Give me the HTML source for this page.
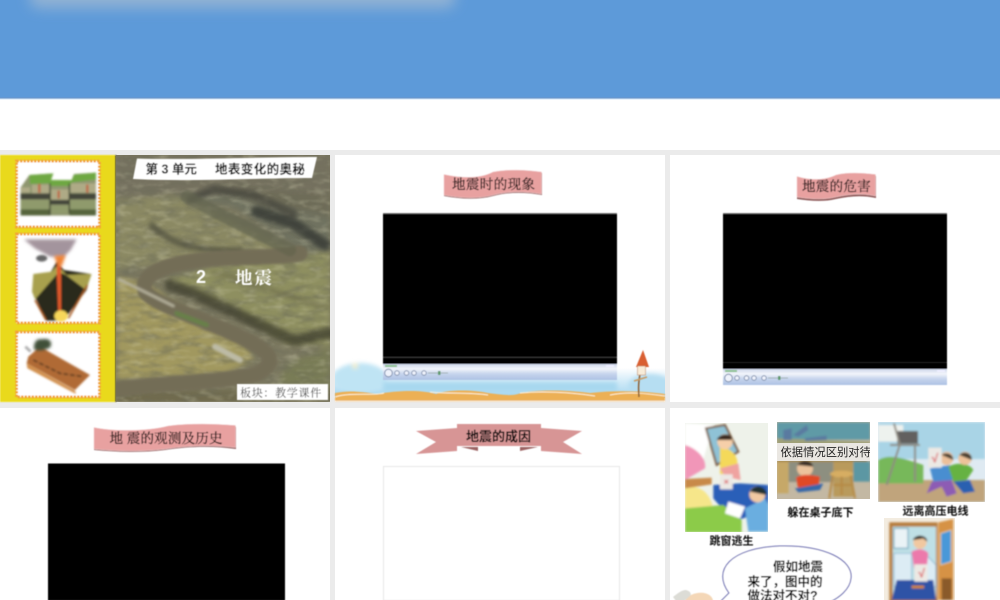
<!DOCTYPE html>
<html lang="zh"><head><meta charset="utf-8"><title>地震</title>
<style>
html,body{margin:0;padding:0;background:#fff;width:1000px;height:600px;overflow:hidden}
svg{display:block}
text{font-family:"Liberation Sans","Noto Sans CJK SC",sans-serif}
.serif{font-family:"Liberation Serif","Noto Serif CJK SC",serif;stroke:#1a0f0f;stroke-width:.22}
</style></head><body>
<svg width="1000" height="600" viewBox="0 0 1000 600" xmlns="http://www.w3.org/2000/svg">
<defs>
<filter id="b03" x="-5%" y="-5%" width="110%" height="110%"><feGaussianBlur stdDeviation="0.4"/></filter>
<filter id="z2" x="-5%" y="-5%" width="110%" height="110%"><feGaussianBlur stdDeviation="3.200"/></filter>
<filter id="z4" x="-10%" y="-10%" width="120%" height="120%"><feGaussianBlur stdDeviation="4"/></filter>
<filter id="z7" x="-10%" y="-10%" width="120%" height="120%"><feGaussianBlur stdDeviation="7"/></filter>
<filter id="z9" x="-20%" y="-20%" width="140%" height="140%"><feGaussianBlur stdDeviation="9"/></filter>
<filter id="b2" x="-20%" y="-40%" width="140%" height="180%"><feGaussianBlur stdDeviation="2"/></filter>
<filter id="b6" x="-30%" y="-200%" width="160%" height="500%"><feGaussianBlur stdDeviation="7"/></filter>
<filter id="dark" x="0" y="0" width="100%" height="100%"><feTurbulence type="fractalNoise" baseFrequency="0.05 0.14" numOctaves="3" seed="7"/><feColorMatrix values="0 0 0 0 .15  0 0 0 0 .15  0 0 0 0 .1  2.400 0 0 0 -1.050"/><feGaussianBlur stdDeviation=".8"/></filter>
<filter id="light" x="0" y="0" width="100%" height="100%"><feTurbulence type="fractalNoise" baseFrequency="0.07 0.18" numOctaves="3" seed="23"/><feColorMatrix values="0 0 0 0 .74  0 0 0 0 .72  0 0 0 0 .5  2.400 0 0 0 -1.150"/><feGaussianBlur stdDeviation=".8"/></filter>
<linearGradient id="ctl" x1="0" y1="0" x2="0" y2="1"><stop offset="0" stop-color="#cdd6ea"/><stop offset=".3" stop-color="#f2f5fb"/><stop offset=".62" stop-color="#c6d4ec"/><stop offset="1" stop-color="#adc2e4"/></linearGradient>
<linearGradient id="sky" x1="0" y1="0" x2="0" y2="1"><stop offset="0" stop-color="#fff"/><stop offset=".3" stop-color="#e0f1fa"/><stop offset="1" stop-color="#9fd4ef"/></linearGradient>
<clipPath id="c1"><rect x="116" y="155" width="214" height="247"/></clipPath>
<clipPath id="cA"><rect x="685" y="423" width="83" height="109"/></clipPath>
<clipPath id="cB"><rect x="777" y="422" width="93" height="77"/></clipPath>
<clipPath id="cC"><rect x="878" y="422" width="107" height="80"/></clipPath>
<clipPath id="cD"><rect x="884" y="518" width="71" height="82"/></clipPath>
<clipPath id="cS"><rect x="335" y="355" width="330" height="47"/></clipPath>
</defs>

<!-- page -->
<rect width="1000" height="600" fill="#ebebeb"/>
<rect width="1000" height="98" fill="#5d9ad9"/>
<rect x="30" y="-24" width="425" height="32" rx="8" fill="#a9bdd2" opacity=".7" filter="url(#b6)"/>
<rect y="97.500" width="1000" height="1" fill="#6d94c6"/>
<rect y="98.500" width="1000" height="1" fill="#cfe6f8"/>
<rect y="99.500" width="1000" height="50.500" fill="#fff"/>
<rect x="0" y="155" width="330" height="247" fill="#fff"/>
<rect x="335" y="155" width="330" height="247" fill="#fff"/>
<rect x="670" y="155" width="330" height="247" fill="#fff"/>
<rect x="0" y="408" width="330" height="192" fill="#fff"/>
<rect x="335" y="408" width="330" height="192" fill="#fff"/>
<rect x="670" y="408" width="330" height="192" fill="#fff"/>

<!-- PANEL 1 -->
<g filter="url(#b03)">
<rect x="0" y="155" width="115" height="247" fill="#e9d91d"/>
<rect x="115" y="155" width="1.500" height="247" fill="#4a4a30"/>
<g fill="#fff" stroke="#f2a436" stroke-width="3" stroke-dasharray="2.400 1.100">
<rect x="16.500" y="161" width="83" height="66"/>
<rect x="16.500" y="234" width="83" height="89"/>
<rect x="16.500" y="332" width="83" height="65"/>
</g>
</g>
<!-- strata -->
<g transform="translate(0,150) scale(.3333)" filter="url(#z2)">
<path d="M62 112L88 75L160 70L150 92H214L222 72L288 68V197H62Z" fill="#8f9670"/>
<path d="M88 75L160 70L150 100L90 102ZM222 74L288 68V88L212 98ZM150 90H214V108H150Z" fill="#6ea842"/>
<path d="M62 112H90V128H62ZM96 104H150V130H96ZM212 100H288V128H212ZM154 118H206V148H154Z" fill="#aeaa86"/>
<path d="M62 130H150V148H62ZM150 150H208V164H150ZM208 130H288V148H208Z" fill="#45473a"/>
<path d="M62 150H150V178H62ZM208 150H288V178H208ZM152 166H206V190H152Z" fill="#8f9a6c"/>
<path d="M62 178H150V196H62ZM208 178H288V196H208Z" fill="#56653c"/>
<path d="M118 102V128M176 122V145M262 104V128" stroke="#c05a36" stroke-width="6"/>
<path d="M150 100V195M208 100V190" stroke="#3d4230" stroke-width="4"/>
</g>
<!-- volcano -->
<g transform="translate(0,150) scale(.3333)" filter="url(#z2)">
<path d="M72 268L230 268L212 300L190 322L150 320L105 295Z" fill="#85707c" opacity=".75" filter="url(#z4)"/>
<ellipse cx="125" cy="325" rx="17" ry="10" fill="#666"/>
<path d="M170 335L192 360L272 372L260 420L190 512H138L98 425L102 380L150 370Z" fill="#2b291c"/>
<path d="M100 372L155 365L168 350L186 360L200 375L275 372L258 420L205 380L192 372L175 368L160 385L105 448L96 425Z" fill="#a8a04e"/>
<path d="M175 325L183 355L183 490H175L170 358Z" fill="#e25a2c"/>
<path d="M162 318L197 315L185 350L174 350Z" fill="#ee8236" filter="url(#z4)"/>
<ellipse cx="183" cy="498" rx="20" ry="17" fill="#f7d75a"/>
<path d="M105 450L138 510M262 405L205 505" stroke="#a85a22" stroke-width="5"/>
</g>
<!-- plate -->
<g transform="translate(0,150) scale(.3333)" filter="url(#z2)">
<path d="M85 620L120 590L270 675L225 720L80 640Z" fill="#b06a36"/>
<path d="M80 640L225 722L228 732L82 655Z" fill="#d2904e"/>
<path d="M100 630L180 670L250 680" fill="none" stroke="#5a3a20" stroke-width="5" stroke-dasharray="14 6"/>
<path d="M102 598C100 575 112 565 125 568C148 562 160 578 150 592C130 604 112 604 102 598Z" fill="#3f4f38" filter="url(#z4)"/>
<path d="M76 590L92 605" stroke="#aaa" stroke-width="8"/>
</g>
<!-- photo -->
<g clip-path="url(#c1)">
<g transform="translate(0,150) scale(.3333)">
<rect x="348" y="15" width="645" height="740" fill="#7b7860"/>
<g filter="url(#z9)">
<rect x="348" y="15" width="645" height="125" fill="#75715e"/>
<path d="M350 150L530 135L880 305L640 320L450 345L350 360Z" fill="#8b8964"/>
<path d="M520 140L700 170L920 310L990 300L990 170L800 130Z" fill="#6f7260"/>
<path d="M640 110L990 130V200L780 160Z" fill="#6e6c58"/>
<path d="M350 380L440 400L560 480L740 580L760 630L680 670L350 690Z" fill="#a1985f"/>
<path d="M500 390L660 340L990 305V590L860 580L700 480Z" fill="#8e8f60"/>
<path d="M860 640L990 590V710L830 710Z" fill="#797c56"/>
<rect x="348" y="720" width="645" height="40" fill="#6f6a4e"/>
</g>
</g>
<rect x="116" y="155" width="214" height="247" filter="url(#dark)" opacity=".6"/>
<rect x="116" y="155" width="214" height="247" filter="url(#light)" opacity=".3"/>
<g transform="translate(0,150) scale(.3333)">
<g fill="none" stroke-linecap="round" stroke-linejoin="round" filter="url(#z7)" opacity=".72">
<path d="M570 150L640 118L760 135L880 190" stroke="#42433a" stroke-width="24"/>
<path d="M770 185L880 220L975 285" stroke="#2f322e" stroke-width="34"/>
<path d="M455 225C500 270 560 305 720 302" stroke="#4a4a3a" stroke-width="18"/>
<path d="M510 405C620 440 760 520 880 570C920 570 960 550 990 550" stroke="#3a3a2c" stroke-width="34"/>
<path d="M640 370C730 380 840 440 980 470" stroke="#6a694a" stroke-width="12"/>
</g>
<g fill="none" stroke-linecap="round" stroke-linejoin="round" filter="url(#z4)">
<path d="M900 310C800 330 650 312 520 345C440 368 420 400 440 430C480 470 620 510 740 570C820 610 830 640 770 672C650 700 500 698 345 718" stroke="#736d56" stroke-width="46"/>
<path d="M560 140C650 190 760 240 870 300" stroke="#62644f" stroke-width="38" opacity=".7"/>
<path d="M358 388L520 468" stroke="#b5b19c" stroke-width="8"/>
<path d="M645 590L720 630" stroke="#bdbba6" stroke-width="18"/>
<path d="M530 490L620 525" stroke="#68804a" stroke-width="14"/>
</g>
</g>
</g>
<g filter="url(#b03)">
<path d="M137 158.500C190 160 260 157 317 157L312 178C260 178 190 182 133 179Z" fill="#fff"/>
<text x="145.500" y="173.500" font-size="12.500" font-weight="700" fill="#111" xml:space="preserve">第 3 单元</text>
<text x="215" y="173.500" font-size="12.500" font-weight="700" fill="#111" letter-spacing=".4">地表变化的奥秘</text>
<text x="196" y="283" font-size="18" font-weight="700" fill="#fff">2</text>
<text x="235" y="284" font-size="17.500" font-weight="700" fill="#fff" letter-spacing="2" style="font-family:'Liberation Serif','Noto Serif CJK SC',serif">地震</text>
<rect x="237" y="384" width="91" height="16" fill="#fff"/>
<text x="240" y="396.500" font-size="11" fill="#222" letter-spacing=".7" style="font-family:'Liberation Serif','Noto Serif CJK SC',serif">板块：教学课件</text>
</g>

<!-- PANEL 2 -->
<g clip-path="url(#cS)">
<rect x="335" y="368" width="330" height="30" fill="url(#sky)"/>
<g filter="url(#b2)">
<ellipse cx="360" cy="378" rx="27" ry="15" fill="#bfe4f4"/>
<ellipse cx="650" cy="386" rx="22" ry="12" fill="#b6def2"/>
<rect x="383" y="382" width="234" height="10" fill="#a8d8ef"/>
<circle cx="355" cy="366" r="3" fill="#f2eecc"/>
</g>
</g>
<g filter="url(#b03)">
<path d="M335 393C350 390 362 392 378 394C392 391 420 389 436 394C445 390 470 389 488 393C505 395 510 396 518 394C530 390 560 389 590 393C615 390 645 391 665 394V402H335Z" fill="#ecb055"/>
<path d="M335 397C350 392 375 396 384 393M430 392C450 394 470 392 488 395M520 393C540 391 570 392 595 396M610 395C630 391 650 394 665 396" fill="none" stroke="#fdf0d8" stroke-width="1"/>
<rect x="335" y="400.500" width="330" height="1.500" fill="#f2dfc6"/>
<rect x="383" y="213" width="234" height="151" fill="#000"/>
<rect x="383" y="213" width="234" height=".8" fill="#888"/>
<rect x="383" y="357" width="234" height=".8" fill="#444"/>
<rect x="383" y="364" width="234" height="16" fill="url(#ctl)"/>
<rect x="385" y="365" width="12" height="2" fill="#8ac08e"/>
<rect x="606" y="365" width="8" height="2" fill="#eef"/>
<g fill="#eef2fb" stroke="#6f80a2" stroke-width=".8">
<circle cx="388.500" cy="373" r="3.800"/><circle cx="397" cy="373" r="2.300"/><circle cx="406.500" cy="373" r="2.300"/><circle cx="414" cy="373" r="2.300"/><circle cx="424" cy="373" r="2.300"/>
</g>
<path d="M428 373H448" stroke="#93a5a5" stroke-width=".8"/>
<rect x="438" y="371" width="2.500" height="4" fill="#5d9a6b"/>
<!-- birdhouse -->
<path d="M639 397C638 386 639 380 640 374" stroke="#8c5f36" stroke-width="1.500" fill="none"/>
<path d="M643 350L636 367H649Z" fill="#d95f30"/>
<rect x="637.500" y="366" width="8" height="9" fill="#f8ecd8" stroke="#b9764a" stroke-width=".5"/>
<path d="M634 381L647 377" stroke="#c99a62" stroke-width="1.500"/>
<!-- banner -->
<path d="M444 176C465 181 482 180 493 174C510 171 525 171 542 173V195C525 192 508 192 493 196C478 200 460 199 444 196Z" fill="#8e5a5a"/>
<path d="M444 174.500C465 179 482 178 493 172C510 169 525 170 541.500 172V194C525 191 508 191 493 195C478 199 460 198 444 195Z" fill="#e8a1a0" stroke="#f3cfcf" stroke-width=".5"/>
<text x="452" y="189" class="serif" font-size="13.500" fill="#1a0f0f" letter-spacing=".4">地震时的现象</text>
</g>

<!-- PANEL 3 -->
<g filter="url(#b03)">
<rect x="723" y="213" width="224" height="156" fill="#000"/>
<rect x="723" y="213" width="224" height=".8" fill="#888"/>
<rect x="723" y="362" width="224" height="1" fill="#222"/>
<rect x="723" y="369" width="224" height="16" fill="url(#ctl)"/>
<rect x="725" y="370" width="12" height="2" fill="#8ac08e"/>
<rect x="937" y="370" width="8" height="2" fill="#eef"/>
<g fill="#eef2fb" stroke="#6f80a2" stroke-width=".8">
<circle cx="728.500" cy="378" r="3.800"/><circle cx="737" cy="378" r="2.300"/><circle cx="746.500" cy="378" r="2.300"/><circle cx="754" cy="378" r="2.300"/><circle cx="764" cy="378" r="2.300"/>
</g>
<path d="M768 378H788" stroke="#93a5a5" stroke-width=".8"/>
<rect x="778" y="376" width="2.500" height="4" fill="#5d9a6b"/>
<path d="M797 178C812 183 826 182 836 177C848 174 862 175 876 176V198C862 195 850 196 836 199C824 202 810 201 797 199Z" fill="#8e5a5a"/>
<path d="M797 176.500C812 181 826 180 836 175C848 172 862 173 875.500 174.500V196C862 193 850 194 836 197C824 200 810 199 797 197Z" fill="#e8a1a0" stroke="#f3cfcf" stroke-width=".5"/>
<text x="802" y="191" class="serif" font-size="13.500" fill="#1a0f0f" letter-spacing=".3">地震的危害</text>
</g>

<!-- PANEL 4 -->
<g filter="url(#b03)">
<rect x="48" y="463.500" width="237" height="137" fill="#000"/>
<path d="M94 429C115 433 150 432 168 427C190 424 215 425 236 427V449C215 446 190 446 165 450C140 453 115 452 94 450Z" fill="#8e5a5a"/>
<path d="M94 427.500C115 432 150 431 168 426C190 423 215 424 235.500 425.500V447.500C215 445 190 445 165 449C140 452 115 451 94 449Z" fill="#e8a1a0" stroke="#f3cfcf" stroke-width=".5"/>
<text x="109.500" y="443" class="serif" font-size="13.500" fill="#1a0f0f" letter-spacing=".2">地 震的观测及历史</text>
</g>

<!-- PANEL 5 -->
<g filter="url(#b03)">
<rect x="383.500" y="466.500" width="236" height="134" fill="#fff" stroke="#e6e6e6" stroke-width="1"/>
<path d="M416 431L457 428V424H541V428L582 431L563 442L582 454L541 451V446H457V451L416 454L436 442Z" fill="#d79595"/>
<path d="M461 447H478L478 451ZM520 447H538L520 451Z" fill="#9c6464"/>
<text x="466" y="441" font-size="13" font-weight="700" fill="#0c0808">地震的成因</text>
</g>

<!-- PANEL 6 -->
<!-- A -->
<g clip-path="url(#cA)">
<rect x="685" y="423" width="83" height="109" fill="#eef2ea"/>
<g transform="translate(670,405) scale(.3333)" filter="url(#z2)">
<path d="M45 55L130 60L95 180L45 170Z" fill="#fff"/>
<path d="M108 70L165 60L205 140L140 180Z" fill="#8fc2d6" stroke="#7a5a3c" stroke-width="6"/>
<path d="M45 120C80 130 110 160 105 190L45 225Z" fill="#f196b8"/>
<path d="M150 125C190 130 215 165 195 195L150 210Z" fill="#f4d95a"/>
<path d="M150 190L205 175L212 225L165 215Z" fill="#efa3a0"/>
<circle cx="165" cy="110" r="23" fill="#f6cfa9"/><path d="M140 105C150 80 190 85 185 105Z" fill="#3b2a22"/>
<path d="M130 240L210 235L295 240V315L190 350L130 280Z" fill="#2a5fb8"/>
<path d="M45 245C100 240 120 270 130 310L45 330Z" fill="#f6e68a"/>
<path d="M45 310L160 300L215 345V382H45Z" fill="#8ccb48"/>
<path d="M225 310L285 280L295 300V380H235Z" fill="#6baee0"/>
<circle cx="262" cy="268" r="24" fill="#f1c9a2"/><path d="M240 260C250 235 290 240 290 270Z" fill="#233"/>
<path d="M175 290L225 305L210 340L165 325Z" fill="#fff"/>
<path d="M45 222L125 218V238L45 250Z" fill="#c8894a"/>
<rect x="150" y="208" width="38" height="45" fill="#ece8e4"/>
<text x="169" y="238" text-anchor="middle" font-size="26" font-weight="700" fill="#d8303c">×</text>
</g>
</g>
<!-- B -->
<g clip-path="url(#cB)">
<rect x="777" y="422" width="93" height="77" fill="#c3b8a3"/>
<g transform="translate(670,405) scale(.3333)" filter="url(#z2)">
<rect x="321" y="52" width="279" height="52" fill="#5e9aa6"/>
<path d="M321 100L600 110V125H321Z" fill="#9fa078"/>
<path d="M340 75L365 70V105H340ZM370 90L410 60L415 75L385 95ZM405 100L470 92L470 105L405 108Z" fill="#5a7aa0"/>
<rect x="321" y="165" width="35" height="100" fill="#c6a868"/>
<rect x="490" y="155" width="60" height="120" fill="#b99a5c"/>
<rect x="321" y="155" width="270" height="16" fill="#a58a52"/>
<rect x="550" y="170" width="50" height="60" fill="#5b97a3"/>
<rect x="356" y="171" width="134" height="60" fill="#8d8f80"/>
<circle cx="405" cy="190" r="24" fill="#ecc39c"/><path d="M382 180C395 160 425 165 430 185Z" fill="#3b2f28"/>
<path d="M378 218C395 205 430 210 450 215L445 248L385 252Z" fill="#e04a28"/>
<path d="M375 250L460 235L450 255L385 262Z" fill="#3868a8"/>
<ellipse cx="515" cy="207" rx="35" ry="10" fill="#d7ad62"/><path d="M488 212L478 280M542 212L555 280M515 215V270M490 240H545" stroke="#b68a44" stroke-width="6"/>
</g>
<rect x="777" y="443" width="93" height="18" fill="#eae7e2"/>
<text x="780.500" y="456" font-size="11.300" fill="#222">依据情况区别对待</text>
</g>
<!-- C -->
<g clip-path="url(#cC)">
<rect x="878" y="422" width="107" height="80" fill="#dfeaf2"/>
<g transform="translate(670,405) scale(.3333)" filter="url(#z2)">
<rect x="625" y="52" width="320" height="110" fill="#a9d4e6"/>
<path d="M625 60H700V110H625Z" fill="#eef2ee"/>
<rect x="625" y="225" width="320" height="66" fill="#c0a47c"/>
<path d="M625 165C660 145 700 160 760 180V235H625Z" fill="#77b85a"/>
<rect x="682" y="78" width="62" height="38" fill="#62615e"/>
<path d="M660 120H750M690 118L650 240M735 118L735 230M672 55L690 120" stroke="#8f8a80" stroke-width="6"/>
<path d="M780 190L840 180L850 225L790 230Z" fill="#4a8ed0"/>
<path d="M785 230L845 225L860 265L830 275L815 245L770 265Z" fill="#8d5cb4"/>
<path d="M835 185C860 170 900 175 910 195L890 225L850 230Z" fill="#66b243"/>
<path d="M850 230L900 225L915 260L880 265Z" fill="#2c60b0"/>
<circle cx="885" cy="160" r="20" fill="#eec29a"/><circle cx="830" cy="160" r="20" fill="#ecc09a"/>
<path d="M815 150C825 140 850 145 850 165ZM868 150C880 135 910 145 905 165Z" fill="#4a4030"/>
<rect x="775" y="128" width="40" height="60" fill="#ece9e4"/>
<text x="795" y="172" text-anchor="middle" font-size="36" font-weight="700" fill="#d8303c">√</text>
</g>
</g>
<!-- D -->
<g clip-path="url(#cD)">
<rect x="884" y="518" width="71" height="82" fill="#f3ece0"/>
<g transform="translate(670,405) scale(.3333)" filter="url(#z2)">
<rect x="658" y="352" width="145" height="240" fill="#b77e3e"/>
<rect x="668" y="365" width="130" height="210" fill="#bfe0e6"/>
<rect x="672" y="370" width="42" height="60" fill="#eaf3f6" stroke="#5f9eb8" stroke-width="3"/>
<path d="M805 352L850 342V585L805 585Z" fill="#d69244"/>
<path d="M812 385L844 375V470L812 480Z" fill="#4898d8" stroke="#f3e0b8" stroke-width="2"/>
<path d="M815 520H845V585H815Z" fill="#8a5a2a"/>
<path d="M672 445H725V545H672Z M770 450L798 480V545H770Z" fill="#dcecf4" stroke="#6ca6c8" stroke-width="2"/>
<path d="M680 525H790L798 585H665Z" fill="#2f52a6"/>
<circle cx="750" cy="412" r="20" fill="#f1c8a0"/><path d="M728 405C738 385 772 390 772 410L760 400Z" fill="#222"/>
<path d="M725 440C740 430 765 430 775 445L770 490H732Z" fill="#ec79ab"/>
<rect x="733" y="478" width="40" height="52" fill="#ece9e4"/>
<text x="755" y="518" text-anchor="middle" font-size="36" font-weight="700" fill="#d8303c">√</text>
<path d="M725 546H762" stroke="#d8862c" stroke-width="8"/>
</g>
</g>
<g filter="url(#b03)">
<text x="709.500" y="544.500" font-size="11" font-weight="700" fill="#111">跳窗逃生</text>
<text x="787.500" y="516" font-size="11" font-weight="700" fill="#111">躲在桌子底下</text>
<text x="902.500" y="514.500" font-size="11" font-weight="700" fill="#111">远离高压电线</text>
<path d="M721 601L729 593C712 570 730 548 780 546C825 545 853 560 851 578C850 590 838 598 830 602" fill="#fff" stroke="#5f61ad" stroke-width="1"/>
<text x="773" y="571" font-size="12.500" font-weight="700" fill="#000">假如地震</text>
<text x="747.500" y="586" font-size="12.500" font-weight="700" fill="#000">来了，图中的</text>
<text x="747.500" y="600" font-size="12.500" font-weight="700" fill="#000">做法对不对?</text>
<path d="M685 601C688 594 698 592 704 593C710 594 713 598 713 601Z" fill="#f4d7b7"/>
<path d="M673 597C678 593 682 590 686 590C690 591 692 594 690 596L684 601H676Z" fill="#dcdcd6"/>
</g>
</svg>
</body></html>
